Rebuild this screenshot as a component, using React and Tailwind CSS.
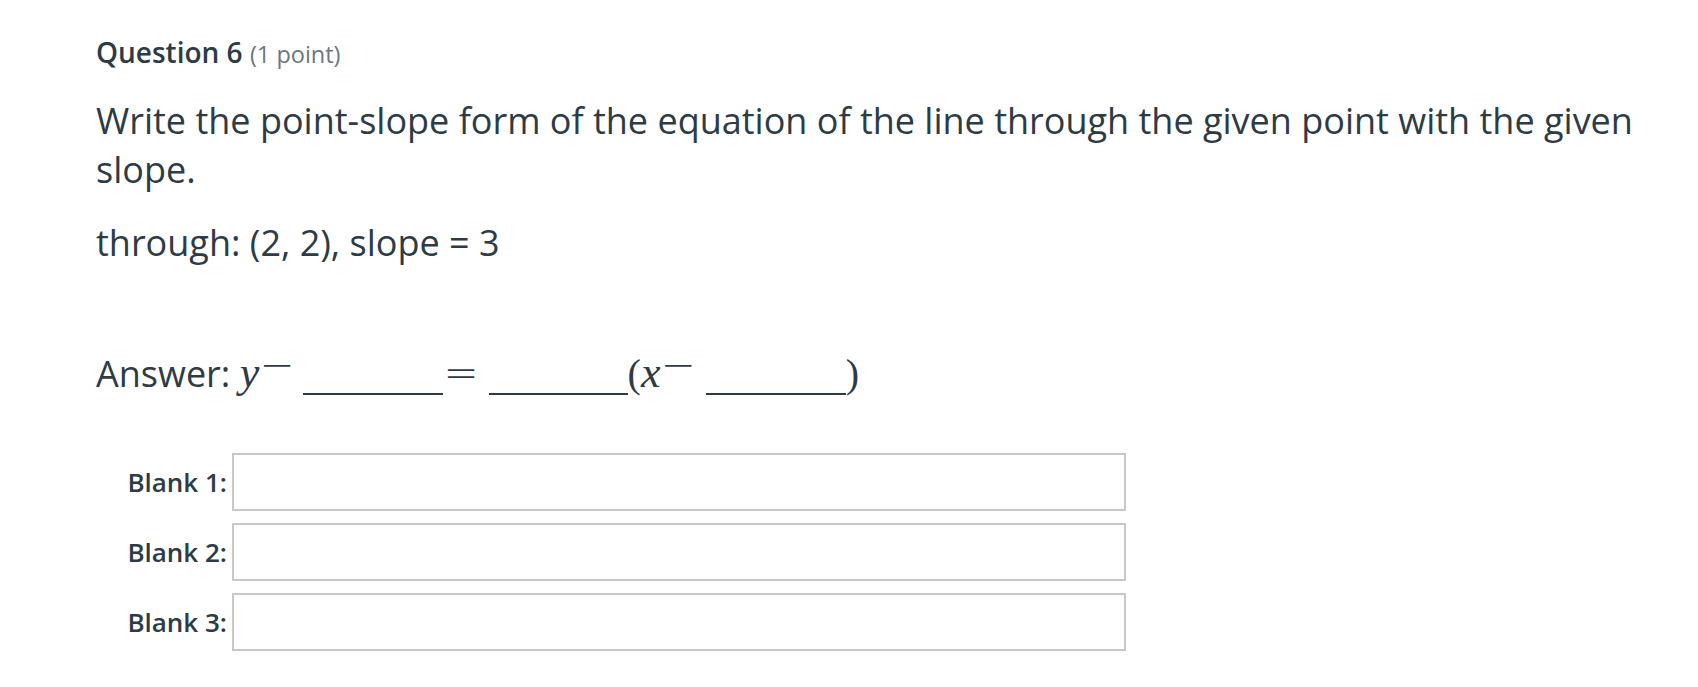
export default function App() {
    const blanks = ['Blank 1:', 'Blank 2:', 'Blank 3:'];

    return (
        <div className="min-h-screen bg-white pl-[96px] pt-[34px] font-['Open_Sans',sans-serif] text-[#2d3b45]">
            {/* Header */}
            <h2 className="text-[28px] leading-[36px] font-semibold">
                Question 6 <span className="text-[23.5px] font-normal text-[#6b7780]">(1 point)</span>
            </h2>

            {/* Question text */}
            <p className="mt-[24px] w-[1580px] text-[36px] leading-[49px]">
                Write the point-slope form of the equation of the line through the given point with the given slope.
            </p>
            <p className="mt-[24px] text-[36px] leading-[49px]">through: (2, 2), slope = 3</p>

            {/* Answer line */}
            <p className="mt-[77px] text-[36px] leading-[49px] whitespace-nowrap">
                Answer:{' '}
                <span className="font-['Liberation_Serif',serif] italic text-[44px] leading-none">y</span>
                <span className="font-['DejaVu_Sans',sans-serif] font-light text-[42px] leading-none align-[8px]">−</span>
                <span className="inline-block w-[140px] ml-[9px] border-b-2 border-[#2d3b45] align-[-8px]"></span>
                <span className="font-['DejaVu_Sans',sans-serif] font-light text-[42px] leading-none">=</span>
                <span className="inline-block w-[139px] ml-[10px] border-b-2 border-[#2d3b45] align-[-8px]"></span>
                <span className="font-['Liberation_Serif',serif] text-[40px] leading-none">(</span>
                <span className="font-['Liberation_Serif',serif] italic text-[44px] leading-none">x</span>
                <span className="font-['DejaVu_Sans',sans-serif] font-light text-[42px] leading-none align-[8px]">−</span>
                <span className="inline-block w-[140px] ml-[10px] border-b-2 border-[#2d3b45] align-[-8px]"></span>
                <span className="font-['Liberation_Serif',serif] text-[40px] leading-none">)</span>
            </p>

            {/* Blanks */}
            <div className="mt-[55px] flex flex-col gap-[12px]">
                {blanks.map((label) => (
                    <div key={label} className="flex items-center">
                        <label className="w-[136px] pr-[5px] text-right text-[26px] font-semibold">{label}</label>
                        <input
                            type="text"
                            className="w-[894px] h-[58px] border-2 border-[#c8c8c8] bg-white outline-none"
                        />
                    </div>
                ))}
            </div>
        </div>
    );
}
